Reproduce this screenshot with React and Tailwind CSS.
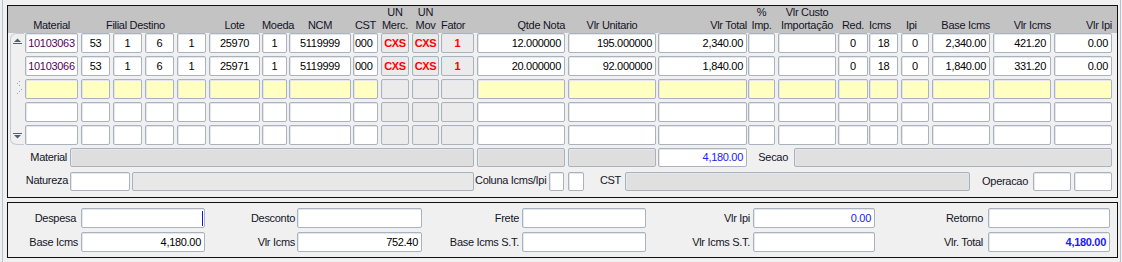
import React from "react";

const COLS = [
  { w: "ml-[1px] w-[53px]", a: "justify-center", t: "text-[#5a005a]" },
  { w: "ml-[3px] w-[29px]", a: "justify-center" },
  { w: "ml-[3px] w-[29px]", a: "justify-center" },
  { w: "ml-[3px] w-[29px]", a: "justify-center" },
  { w: "ml-[3px] w-[29px]", a: "justify-center" },
  { w: "ml-[3px] w-[51px]", a: "justify-center" },
  { w: "ml-[2px] w-[25px]", a: "justify-center" },
  { w: "ml-[2px] w-[62px]", a: "justify-center" },
  { w: "ml-[2px] w-[25px]", a: "justify-start pl-[1px]" },
  { w: "ml-[3px] w-[28px]", a: "justify-center", gray: true, t: "text-[#ff0000] font-bold" },
  { w: "ml-[3px] w-[27px]", a: "justify-center", gray: true, t: "text-[#ff0000] font-bold" },
  { w: "ml-[2px] w-[33px]", a: "justify-center", gray: true, t: "text-[#ff0000] font-bold" },
  { w: "ml-[3px] w-[88px]", a: "justify-end pr-[3px]" },
  { w: "ml-[3px] w-[88px]", a: "justify-end pr-[3px]" },
  { w: "ml-[2px] w-[89px]", a: "justify-end pr-[3px]" },
  { w: "ml-[1px] w-[27px]", a: "justify-center" },
  { w: "ml-[3px] w-[58px]", a: "justify-center" },
  { w: "ml-[2px] w-[30px]", a: "justify-center" },
  { w: "ml-[1px] w-[29px]", a: "justify-center" },
  { w: "ml-[3px] w-[28px]", a: "justify-center" },
  { w: "ml-[3px] w-[58px]", a: "justify-end pr-[3px]" },
  { w: "ml-[3px] w-[58px]", a: "justify-end pr-[4px]" },
  { w: "ml-[3px] w-[58px]", a: "justify-end pr-[3px]" },
];

const ROWS = [
  { bg: "bg-white", d: ["10103063", "53", "1", "6", "1", "25970", "1", "5119999", "000", "CXS", "CXS", "1", "12.000000", "195.000000", "2,340.00", "", "", "0", "18", "0", "2,340.00", "421.20", "0.00"] },
  { bg: "bg-white", d: ["10103066", "53", "1", "6", "1", "25971", "1", "5119999", "000", "CXS", "CXS", "1", "20.000000", "92.000000", "1,840.00", "", "", "0", "18", "0", "1,840.00", "331.20", "0.00"] },
  { bg: "bg-[#ffffc2]", d: [] },
  { bg: "bg-white", d: [] },
  { bg: "bg-white", d: [] },
];

const HEAD = [
  { w: "ml-[1px] w-[53px]", a: "text-center", l: ["Material"] },
  { w: "ml-[3px] w-[125px]", a: "text-left pl-[25px]", l: ["Filial Destino"] },
  { w: "ml-[3px] w-[51px]", a: "text-center", l: ["Lote"] },
  { w: "ml-[2px] w-[25px]", a: "text-left", l: ["Moeda"] },
  { w: "ml-[2px] w-[62px]", a: "text-center", l: ["NCM"] },
  { w: "ml-[2px] w-[25px]", a: "text-center", l: ["CST"] },
  { w: "ml-[3px] w-[28px]", a: "text-center", l: ["UN", "Merc."] },
  { w: "ml-[3px] w-[27px]", a: "text-center", l: ["UN", "Mov"] },
  { w: "ml-[2px] w-[33px]", a: "text-left", l: ["Fator"] },
  { w: "ml-[3px] w-[88px]", a: "text-right", l: ["Qtde Nota"] },
  { w: "ml-[3px] w-[88px]", a: "text-center", l: ["Vlr Unitario"] },
  { w: "ml-[2px] w-[89px]", a: "text-right", l: ["Vlr Total"] },
  { w: "ml-[1px] w-[27px]", a: "text-center", l: ["%", "Imp."] },
  { w: "ml-[3px] w-[58px]", a: "text-center", l: ["Vlr Custo", "Importação"] },
  { w: "ml-[2px] w-[30px]", a: "text-center", l: ["Red."] },
  { w: "ml-[1px] w-[29px]", a: "text-left", l: ["Icms"] },
  { w: "ml-[3px] w-[28px]", a: "text-left pl-[5px]", l: ["Ipi"] },
  { w: "ml-[3px] w-[58px]", a: "text-right", l: ["Base Icms"] },
  { w: "ml-[3px] w-[58px]", a: "text-right", l: ["Vlr Icms"] },
  { w: "ml-[3px] w-[58px]", a: "text-right", l: ["Vlr Ipi"] },
];

const BOX = "h-full shrink-0 flex items-center border border-[#a9b2bd] rounded-[2px] overflow-hidden whitespace-nowrap shadow-[inset_1px_1px_0_#e4e8ee]";

function Box({ cls = "", bg = "bg-white", align = "justify-center", text = "", children }) {
  return (
    <div className={`${BOX} ${cls} ${bg} ${align} ${text}`}>{children}</div>
  );
}

function Label({ cls, children }) {
  return <div className={`shrink-0 whitespace-nowrap text-[#141428] ${cls}`}>{children}</div>;
}

function ScrollBar() {
  return (
    <div className="ml-[2px] w-[14px] h-[112px] shrink-0 flex flex-col justify-between border-l border-[#c2ccd8] rounded-l-[6px]">
      <div className="h-[14px] w-[13px] border-t border-[#c2ccd8] rounded-tl-[6px] flex items-center justify-center">
        <svg width="13" height="13" viewBox="0 0 13 13">
          <polygon points="3,8 6.5,4.5 10,8" fill="#55606c" />
          <rect x="2" y="9" width="9" height="1" fill="#55606c" />
        </svg>
      </div>
      <div className="flex items-center justify-center">
        <svg width="13" height="16" viewBox="0 0 13 16">
          <rect x="8" y="1" width="1" height="1" fill="#9aa4b0" />
          <rect x="6" y="3" width="1" height="1" fill="#9aa4b0" />
          <rect x="8" y="5" width="1" height="1" fill="#9aa4b0" />
          <rect x="10" y="9" width="1" height="1" fill="#9aa4b0" />
          <rect x="8" y="11" width="1" height="1" fill="#9aa4b0" />
          <rect x="6" y="13" width="1" height="1" fill="#9aa4b0" />
        </svg>
      </div>
      <div className="h-[16px] w-[13px] border-b border-[#c2ccd8] rounded-bl-[6px] flex items-center justify-center">
        <svg width="13" height="13" viewBox="0 0 13 13">
          <rect x="2" y="3" width="9" height="1" fill="#55606c" />
          <polygon points="3,5 10,5 6.5,8.5" fill="#55606c" />
        </svg>
      </div>
    </div>
  );
}

export default function App() {
  return (
    <div
      className="w-[1122px] h-[262px] bg-[#f0f0f0] pl-[2px] pr-[1px] text-[11px] tracking-[-0.3px] text-black overflow-hidden"
      style={{ fontFamily: '"Liberation Sans", Arial, sans-serif' }}
    >
      <div className="h-full border-l border-r border-[#b8c2cf] pl-[4px] pr-[2px] pt-[5px]">
        {/* Top panel */}
        <div className="h-[193px] border border-[#111] bg-[#f0f0f0] flex flex-col">
          {/* header */}
          <div className="h-[27px] bg-[#c3c3c3] flex shrink-0">
            <div className="ml-[2px] w-[14px] shrink-0" />
            {HEAD.map((h, i) => (
              <div key={i} className={`${h.w} ${h.a} shrink-0 flex flex-col justify-end pb-[1px] leading-[13px] whitespace-nowrap text-[#141428]`}>
                {h.l.map((s, j) => (
                  <div key={j}>{s}</div>
                ))}
              </div>
            ))}
          </div>

          {/* rows */}
          <div className="flex shrink-0">
            <ScrollBar />
            <div className="flex flex-col gap-[3px]">
              {ROWS.map((r, ri) => (
                <div key={ri} className="flex h-[20px]">
                  {COLS.map((c, ci) => (
                    <Box
                      key={ci}
                      cls={c.w}
                      bg={c.gray ? "bg-[#ebebeb]" : r.bg}
                      align={c.a}
                      text={c.t || ""}
                    >
                      {r.d[ci] || ""}
                    </Box>
                  ))}
                </div>
              ))}
            </div>
          </div>

          {/* Material row */}
          <div className="flex h-[19px] mt-[3px] items-center shrink-0">
            <Label cls="w-[62px] text-right pr-[3px]">Material</Label>
            <Box cls="w-[404px]" bg="bg-[#dedede]" />
            <Box cls="ml-[3px] w-[88px]" bg="bg-[#dedede]" />
            <Box cls="ml-[3px] w-[88px]" bg="bg-[#dedede]" />
            <Box cls="ml-[2px] w-[89px]" align="justify-end pr-[3px]" text="text-[#1a1aff]">4,180.00</Box>
            <Label cls="w-[47px] text-right pr-[6px]">Secao</Label>
            <Box cls="w-[318px]" bg="bg-[#e0e0e0]" />
          </div>

          {/* Natureza row */}
          <div className="flex h-[19px] mt-[5px] items-center shrink-0">
            <Label cls="w-[62px] text-right pr-[2px] -mt-[3px]">Natureza</Label>
            <Box cls="w-[60px]" />
            <Box cls="ml-[2px] w-[342px]" bg="bg-[#e8e8e8]" />
            <Label cls="w-[75px] pl-[1px] -mt-[3px]">Coluna Icms/Ipi</Label>
            <Box cls="w-[15px]" />
            <Box cls="ml-[4px] w-[16px]" />
            <Label cls="w-[41px] text-right pr-[4px] -mt-[3px]">CST</Label>
            <Box cls="w-[345px]" bg="bg-[#e0e0e0]" />
            <Label cls="w-[63px] text-right pr-[5px]">Operacao</Label>
            <Box cls="w-[38px]" />
            <Box cls="ml-[3px] w-[38px]" />
          </div>
        </div>

        {/* Bottom panel */}
        <div className="mt-[4px] h-[56px] border border-[#111] bg-[#f0f0f0] pt-[5px] flex flex-col gap-[4px]">
          <div className="flex h-[20px] items-center">
            <Label cls="w-[70px] text-right pr-[2px]">Despesa</Label>
            <Box cls="ml-[3px] w-[124px]" align="justify-end pr-[1px]">
              <span className="w-[1px] h-[15px] bg-[#1414d2]" />
            </Box>
            <Label cls="w-[90px] text-right">Desconto</Label>
            <Box cls="ml-[2px] w-[125px]" />
            <Label cls="w-[97px] text-right">Frete</Label>
            <Box cls="ml-[3px] w-[124px]" />
            <Label cls="w-[104px] text-right">Vlr Ipi</Label>
            <Box cls="ml-[3px] w-[122px]" align="justify-end pr-[3px]" text="text-[#1a1aff]">0.00</Box>
            <Label cls="w-[108px] text-right">Retorno</Label>
            <Box cls="ml-[5px] w-[122px]" />
          </div>
          <div className="flex h-[20px] items-center">
            <Label cls="w-[70px] text-right">Base Icms</Label>
            <Box cls="ml-[3px] w-[124px]" align="justify-end pr-[3px]">4,180.00</Box>
            <Label cls="w-[90px] text-right">Vlr Icms</Label>
            <Box cls="ml-[2px] w-[125px]" align="justify-end pr-[3px]">752.40</Box>
            <Label cls="w-[97px] text-right">Base Icms S.T.</Label>
            <Box cls="ml-[3px] w-[124px]" />
            <Label cls="w-[104px] text-right">Vlr Icms S.T.</Label>
            <Box cls="ml-[3px] w-[122px]" />
            <Label cls="w-[108px] text-right">Vlr. Total</Label>
            <Box cls="ml-[5px] w-[122px]" align="justify-end pr-[3px]" text="text-[#1a1aff] font-bold">4,180.00</Box>
          </div>
        </div>
      </div>
    </div>
  );
}
